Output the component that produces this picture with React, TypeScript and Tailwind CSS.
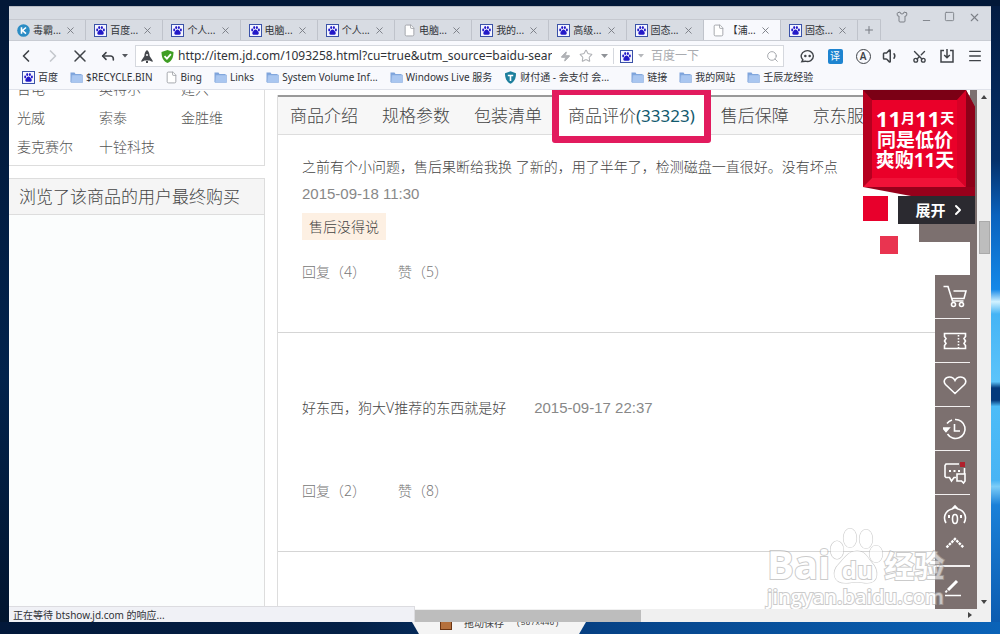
import type { ReactNode } from "react";
import { ChevronLeft, ChevronRight, File, Menu, Minus, Plus, Reply, Scissors, Search, Shirt, Square, Star, Volume1, X, Zap } from "lucide-react";

type IconKind = "duba" | "paw" | "page" | "folder" | "shield";

interface Tab {
  title: string;
  icon: IconKind;
  active?: boolean;
}

interface Bookmark {
  title: string;
  icon: IconKind;
}

const tabs: Tab[] = [
  { title: "毒霸...", icon: "duba" },
  { title: "百度...", icon: "paw" },
  { title: "个人...", icon: "paw" },
  { title: "电脑...", icon: "paw" },
  { title: "个人...", icon: "paw" },
  { title: "电脑...", icon: "page" },
  { title: "我的...", icon: "paw" },
  { title: "高级...", icon: "paw" },
  { title: "固态...", icon: "paw" },
  { title: "【浦...", icon: "page", active: true },
  { title: "固态...", icon: "paw" },
];

const bookmarks: Bookmark[] = [
  { title: "百度", icon: "paw" },
  { title: "$RECYCLE.BIN", icon: "folder" },
  { title: "Bing", icon: "page" },
  { title: "Links", icon: "folder" },
  { title: "System Volume Inf...", icon: "folder" },
  { title: "Windows Live 服务", icon: "folder" },
  { title: "财付通 - 会支付 会...", icon: "shield" },
  { title: "链接", icon: "folder" },
  { title: "我的网站", icon: "folder" },
  { title: "壬辰龙经验", icon: "folder" },
];

const brands = ["台电", "英特尔", "建兴", "光威", "索泰", "金胜维", "麦克赛尔", "十铨科技"];

function PawIcon() {
  return (
    <svg viewBox="0 0 13 13" className="size-[13px] shrink-0">
      <rect x="0.5" y="0.5" width="12" height="12" fill="#f4f5ff" stroke="#3a52a8" />
      <ellipse cx="3.2" cy="6" rx="1" ry="1.4" fill="#2319c8" />
      <ellipse cx="5.2" cy="3.4" rx="1" ry="1.5" fill="#2319c8" />
      <ellipse cx="7.9" cy="3.4" rx="1" ry="1.5" fill="#2319c8" />
      <ellipse cx="9.9" cy="6" rx="1" ry="1.4" fill="#2319c8" />
      <path d="M6.5 5.6c1.4 0 1.8 1.4 2.8 2.4s.4 2.8-1 2.8H4.8c-1.5 0-2-1.8-1-2.8s1.3-2.4 2.7-2.4z" fill="#2319c8" />
    </svg>
  );
}

function SiteIcon({ kind }: { kind: IconKind }) {
  if (kind === "paw") return <PawIcon />;
  if (kind === "page") return <File className="size-[13px] shrink-0 fill-white text-[#9a9ca2]" strokeWidth={1.6} />;
  if (kind === "folder") {
    return (
      <svg viewBox="0 0 13 13" className="size-[13px] shrink-0">
        <path d="M0.5 11V1.5h4l1 1.5h6v8z" fill="#7ea4dc" />
        <path d="M1 11.5l1-7.5h10.5v7.5z" fill="#a9c6f0" stroke="#8fb0e0" strokeWidth="0.6" />
      </svg>
    );
  }
  if (kind === "shield") {
    return (
      <svg viewBox="0 0 13 13" className="size-[13px] shrink-0">
        <path d="M6.5 0.3l5.5 2c0 5-1.5 8.5-5.5 10.5C2.5 10.8 1 7.3 1 2.3z" fill="#1d7f9d" />
        <path d="M3.8 3.8h5.4v1.5H7.3v4.7H5.700V5.3H3.8z" fill="#fff" />
      </svg>
    );
  }
  return (
    <svg viewBox="0 0 13 13" className="size-[13px] shrink-0">
      <circle cx="6.5" cy="6.5" r="6.3" fill="#2b8cc4" />
      <path d="M4.5 3.3v6.4M9 3.5L5.5 6.5 9 9.7" fill="none" stroke="#fff" strokeWidth="1.6" />
    </svg>
  );
}

function ToolButton({ label, children }: { label: string; children: ReactNode }) {
  return (
    <button type="button" aria-label={label} className="flex size-7 items-center justify-center text-[#3f4348]">
      {children}
    </button>
  );
}

function TabStrip() {
  return (
    <div className="flex h-[34px] shrink-0 items-end border-b border-[#c9ccd3] bg-[#d8dce3]">
      <div className="flex min-w-0 flex-1 items-end border-t border-[#c6c9d0]">
        {tabs.map((tab, i) => (
          <div key={i} className={`flex h-5 min-w-0 flex-1 items-center gap-[3px] border-r border-[#bfc3cb] pl-2 pr-[9px] ${tab.active ? "bg-[#f8f9fd]" : ""}`}>
            <SiteIcon kind={tab.icon} />
            <span className="flex-1 whitespace-nowrap text-[10px] leading-4 text-[#303338]">{tab.title}</span>
            <button type="button" aria-label="关闭标签" className="text-[#777b82]"><X className="size-[11px]" strokeWidth={2} /></button>
          </div>
        ))}
        <button type="button" aria-label="新标签" className="flex h-5 w-[23px] shrink-0 items-center justify-center border-r border-[#bfc3cb] text-[#777b82]"><Plus className="size-3" strokeWidth={2} /></button>
      </div>
      <div className="flex h-full w-[110px] shrink-0 items-start justify-between pb-3 pl-[15px] pr-[10px] pt-1 text-[#7c8087]">
        <button type="button" aria-label="皮肤"><Shirt className="size-3" strokeWidth={2} /></button>
        <button type="button" aria-label="最小化" className="pt-1"><Minus className="size-[11px]" strokeWidth={2} /></button>
        <button type="button" aria-label="最大化"><Square className="size-[11px]" strokeWidth={2} /></button>
        <button type="button" aria-label="关闭"><X className="size-[13px]" strokeWidth={2} /></button>
      </div>
    </div>
  );
}

function Toolbar() {
  return (
    <div className="flex h-7 shrink-0 items-center pr-[2px] pt-[2px]">
      <div className="flex w-[126px] shrink-0 items-center pl-[3px]">
        <ToolButton label="后退"><ChevronLeft className="size-5" strokeWidth={2} /></ToolButton>
        <button type="button" aria-label="前进" className="flex w-[26px] justify-center text-[#c5c8ce]"><ChevronRight className="size-5" strokeWidth={2} /></button>
        <ToolButton label="停止"><X className="size-5" strokeWidth={1.8} /></ToolButton>
        <ToolButton label="恢复"><Reply className="size-4" strokeWidth={2.4} /></ToolButton>
        <svg viewBox="0 0 6 4" className="w-[6px]"><path d="M0 0h6L3 3.5z" fill="#55585e" /></svg>
      </div>
      <div className="flex h-[22px] min-w-0 flex-1 items-center border border-[#d5d8de] bg-white">
        <div className="flex min-w-0 flex-1 items-center pl-[5px]">
          <svg viewBox="0 0 12 13" className="mr-2 w-3 shrink-0">
            <path d="M6 0c2 1.5 2.6 4 2.6 6l3 4.5v1.5L8.5 10.5h-5L0.4 12v-1.5l3-4.5C3.4 4 4 1.5 6 0zM5 11h2v2H5z" fill="#45484d" />
            <circle cx="6" cy="5" r="1" fill="#fff" />
          </svg>
          <svg viewBox="0 0 13 13" className="mr-[4px] w-[13px] shrink-0">
            <path d="M6.5 0l6 2c0 5-1.5 9-6 11C2 11 0.5 7 0.5 2z" fill="#3f9e24" />
            <path d="M3.5 6.2l2.4 2.4 4-4.4" fill="none" stroke="#fff" strokeWidth="1.8" />
          </svg>
          <input aria-label="地址" readOnly value="http://item.jd.com/1093258.html?cu=true&utm_source=baidu-search" className="min-w-0 flex-1 bg-transparent text-[12px] leading-4 text-[#303338] outline-none" />
        </div>
        <div className="ml-2 flex shrink-0 items-center gap-2 pr-[5px] text-[#b0b2b6]">
          <Zap className="size-[11px] fill-current" />
          <Star className="size-[14px]" strokeWidth={1.8} />
          <svg viewBox="0 0 8 5" className="w-[7px]"><path d="M0 0h8L4 4.500z" fill="#8f9297" /></svg>
        </div>
        <div className="flex w-[170px] shrink-0 items-center border-l border-[#d5d8de] pl-[6px] pr-1">
          <PawIcon />
          <svg viewBox="0 0 6 4" className="ml-[5px] mr-[7px] w-[6px] shrink-0"><path d="M0 0h6L3 3.5z" fill="#b5b7bb" /></svg>
          <input aria-label="搜索" placeholder="百度一下" className="min-w-0 flex-1 bg-transparent text-[12px] leading-4 outline-none placeholder:text-[#a9abb0]" />
          <Search className="size-[13px] shrink-0 text-[#a5a8ad]" strokeWidth={1.8} />
        </div>
      </div>
      <div className="ml-[9px] flex shrink-0 items-center">
        <ToolButton label="消息">
          <svg viewBox="0 0 16 16" className="size-[15px]" fill="none" stroke="currentColor" strokeWidth="1.5">
            <path d="M2 13.500l1-2A6.5 5.8 0 1 1 5.5 13z" />
            <circle cx="5.7" cy="7.5" r="0.6" fill="currentColor" /><circle cx="10.3" cy="7.5" r="0.6" fill="currentColor" />
          </svg>
        </ToolButton>
        <ToolButton label="翻译"><span className="flex size-[15px] items-center justify-center rounded-xs bg-[#1e84d0] text-[10px] leading-none text-white">译</span></ToolButton>
        <ToolButton label="朗读"><span className="flex size-[15px] items-center justify-center rounded-full border border-[#3f4348] text-[10px] font-semibold leading-none">A</span></ToolButton>
        <ToolButton label="声音"><Volume1 className="size-[18px]" strokeWidth={2} /></ToolButton>
        <ToolButton label="截图"><Scissors className="size-[15px] -rotate-90" strokeWidth={2.2} /></ToolButton>
        <ToolButton label="下载">
          <svg viewBox="0 0 14 14" className="size-[14px]" fill="none" stroke="currentColor" strokeWidth="1.5">
            <path d="M4 1.5H1v11.5h12V1.5h-3M7 0v8.5M4.2 6L7 8.8 9.8 6" />
          </svg>
        </ToolButton>
        <ToolButton label="菜单"><Menu className="size-4" strokeWidth={2} /></ToolButton>
      </div>
    </div>
  );
}

function BookmarkBar() {
  return (
    <nav className="flex h-[21px] shrink-0 items-center gap-3 overflow-hidden border-b border-[#dfe2ea] pb-1 pl-[13px]">
      {bookmarks.map((b) => (
        <a key={b.title} href="#" className={`flex shrink-0 items-center gap-[3px] whitespace-nowrap text-[10px] leading-4 text-[#303338] ${b.icon === "shield" ? "w-[115px]" : ""}`}>
          <SiteIcon kind={b.icon} />
          {b.title}
        </a>
      ))}
    </nav>
  );
}

function LeftColumn() {
  return (
    <aside className="flex w-64 shrink-0 flex-col">
      <div className="overflow-hidden border-b border-r border-[#ddd] pb-1">
        <ul className="-mt-4 grid grid-cols-[82px_82px_82px] pl-2 text-[14px] font-light leading-[29px] text-[#555]">
          {brands.map((brand) => (
            <li key={brand}><a href="#">{brand}</a></li>
          ))}
        </ul>
      </div>
      <section className="mt-3 flex min-h-0 flex-1 flex-col border-r border-t border-[#ddd] bg-[#fbfdfd]">
        <h2 className="h-9 shrink-0 border-b border-[#ddd] bg-[#f5f5f5] pl-[10px] text-[17px] font-light leading-9 text-[#444]">浏览了该商品的用户最终购买</h2>
      </section>
    </aside>
  );
}

function ProductTabs() {
  return (
    <nav className="flex h-10 shrink-0 items-center gap-6 whitespace-nowrap border-b border-t-2 border-b-[#ddd] border-t-[#999] bg-[#f7f7f7] pl-3 text-[17px] font-light leading-6 text-[#444]">
      <a href="#">商品介绍</a>
      <a href="#">规格参数</a>
      <a href="#">包装清单</a>
      <a href="#" className="relative mx-[2px]">
        <span className="absolute -inset-x-4 -bottom-[15px] -top-4 rounded-[3px] border-[7px] border-[#e21b5e] bg-white" />
        <span className="relative">商品评价<span className="font-normal text-[#125a6e]">(33323)</span></span>
      </a>
      <a href="#">售后保障</a>
      <a href="#">京东服务</a>
    </nav>
  );
}

function Replies({ replies, likes }: { replies: number; likes: number }) {
  return (
    <div className="flex gap-8 leading-5 text-[#777]">
      <button type="button">回复（{replies}）</button>
      <button type="button">赞（{likes}）</button>
    </div>
  );
}

function Reviews() {
  return (
    <div className="min-h-0 flex-1 text-[14px] font-light leading-[27px] text-[#444]">
      <article className="border-b border-[#d5d5d5] pb-[50px] pl-6 pt-[18px]">
        <p className="whitespace-nowrap">之前有个小问题，售后果断给我换 了新的，用了半年了，检测磁盘一直很好。没有坏点</p>
        <time className="block font-['Liberation_Sans',sans-serif] text-[15px] text-[#888]">2015-09-18 11:30</time>
        <span className="mb-[22px] mt-[6px] block w-fit bg-[#fdf0e3] px-[7px]">售后没得说</span>
        <Replies replies={4} likes={5} />
      </article>
      <article className="border-b border-[#d5d5d5] pb-[50px] pl-6 pt-[61px]">
        <div className="mb-[60px] flex gap-7">
          <p>好东西，狗大V推荐的东西就是好</p>
          <time className="font-['Liberation_Sans',sans-serif] text-[15px] text-[#888]">2015-09-17 22:37</time>
        </div>
        <Replies replies={2} likes={8} />
      </article>
    </div>
  );
}

function SaleBanner() {
  return (
    <div className="absolute right-[2px] top-0 w-28">
      <div className="relative h-[106px]">
        <svg viewBox="0 0 112 106" className="absolute inset-0 size-full">
          <path d="M0 0h103l9 17v89H48L0 97z" fill="#97001b" />
          <path d="M0 0h103L94 10H9z" fill="#7b0015" />
          <path d="M0 0l9 10v78L0 97z" fill="#b5001f" />
          <path d="M103 0l9 17v80h-9z" fill="#8d0018" />
          <path d="M103 0v97L94 88V10z" fill="#d80026" />
          <path d="M0 97l9-9h85l9 9z" fill="#f01238" />
          <path d="M9 10h85v78H9z" fill="#ea0029" />
        </svg>
        <div className="relative flex flex-col items-center pr-2 pt-4 font-bold text-white">
          <p className="flex items-end text-[14px] leading-6"><span className="text-[22px]">11</span>月<span className="text-[22px]">11</span>天</p>
          <p className="text-[19px] leading-5">同是低价</p>
          <p className="text-[19px] leading-5">爽购11天</p>
        </div>
      </div>
      <div className="flex items-start justify-between">
        <span className="size-[25px] bg-[#e8002c]" />
        <button type="button" className="flex h-7 w-[77px] items-center justify-center gap-1 bg-[#2b2a30] pl-2 text-[15px] font-bold text-white">
          展开<ChevronRight className="size-4" strokeWidth={3} />
        </button>
      </div>
      <div className="flex items-start">
        <span className="ml-[17px] mt-3 size-[18px] bg-[#e93450]" />
        <span className="ml-[21px] h-[18px] flex-1 bg-[#7c706f]" />
      </div>
    </div>
  );
}

function SideButton({ label, children }: { label: string; children: ReactNode }) {
  return (
    <button type="button" aria-label={label} className="flex h-11 w-full items-center justify-center border-b border-[#f3f0f0] pl-1">
      <svg viewBox="0 0 24 24" className="size-6" fill="none" stroke="#fff" strokeWidth="1.6">{children}</svg>
    </button>
  );
}

function SideToolbar() {
  return (
    <div className="absolute bottom-0 right-[7px] top-[185px] flex w-[35px] flex-col bg-[#7c706f]">
      <SideButton label="购物车">
        <path d="M0.5 1.5H5l4.5 14.5h11M10.5 6H23l-2 7.5H9" />
        <circle cx="10.5" cy="19.5" r="2" /><circle cx="18.5" cy="19.5" r="2" />
      </SideButton>
      <SideButton label="优惠券">
        <path d="M1.5 4.5h21v3l-1.5 2 1.5 2.5-1.5 2.5 1.5 2v3h-21v-3l1.5-2L1.5 12 3 9.5l-1.5-2z" />
        <path d="M15.5 6v13" strokeDasharray="1.5 1.5" />
      </SideButton>
      <SideButton label="关注">
        <path d="M12 20.5L2.500 11.500C-0.500 8 2.500 4 6.500 4 9 4 11 5.500 12 7.500 13 5.500 15 4 17.500 4c4 0 7 4 4 7.500z" />
      </SideButton>
      <SideButton label="历史">
        <path d="M4 6.5A9.8 9.8 0 0 1 9 3M12 2.500A9.5 9.5 0 1 1 4.5 17M11.5 7v7H17" />
        <path d="M0 11h6l-3 3.5z" fill="#fff" />
      </SideButton>
      <SideButton label="咨询">
        <path d="M16 3H3L2 4.5v11l1 1h3.5l2 3.5 2.5-3.5h2M21.5 7v6" />
        <path d="M14 13h8v7l-1.5 2-2-2H14z" />
        <path d="M6 10h2M10.5 10h2M15 10h2" strokeWidth="2" />
        <rect x="17" y="1" width="5" height="5" fill="#b0202c" stroke="none" />
      </SideButton>
      <div className="flex h-[72px] flex-col items-center gap-[10px] border-b-2 border-[#f3f0f0] pl-1 pt-2">
        <button type="button" aria-label="京东助手">
          <svg viewBox="0 0 24 24" className="size-6" fill="none" stroke="#fff" strokeWidth="1.6">
            <path d="M3 20c-3-5-1.5-12 6-14l3-3 3 3c7.5 2 9 9 6 14M9 6l3-1.5L15 6" />
            <ellipse cx="12" cy="16" rx="2.5" ry="4.5" />
            <path d="M6 12v3M18 12v3" strokeWidth="2" />
          </svg>
        </button>
        <button type="button" aria-label="展开更多">
          <svg viewBox="0 0 20 12" className="w-5" fill="none" stroke="#fff" strokeWidth="2.4">
            <path d="M1.5 10.5L10 2l8.500 8.500" strokeDasharray="2.6 0.9" />
          </svg>
        </button>
      </div>
      <button type="button" aria-label="反馈" className="flex flex-1 items-center justify-center">
        <svg viewBox="0 0 18 18" className="size-[18px]" fill="none" stroke="#fff">
          <path d="M4 11L13 2" strokeWidth="3" /><path d="M1.5 13.5l1.5-2" strokeWidth="2" /><path d="M1 16.5h16" strokeWidth="1.5" />
        </svg>
      </button>
    </div>
  );
}

function Watermark() {
  return (
    <div className="pointer-events-none absolute bottom-0 right-[32px] w-[178px] whitespace-nowrap font-['Open_Sans','Noto_Sans_CJK_SC',sans-serif] font-bold text-white opacity-60 [-webkit-text-stroke:2px_#aaa] [paint-order:stroke_fill]">
      <div className="flex items-end">
        <span className="text-[40px] leading-[44px]">Bai</span>
        <span className="relative block h-[60px] w-[54px]">
          <svg viewBox="0 0 54 60" className="absolute inset-0 size-full" fill="#fff" stroke="#aaa" strokeWidth="1.2">
            <ellipse cx="7" cy="24" rx="6.5" ry="9" />
            <ellipse cx="20" cy="12" rx="6.5" ry="9.5" />
            <ellipse cx="36" cy="13" rx="6.5" ry="9.5" />
            <ellipse cx="46" cy="28" rx="6.5" ry="8.5" />
            <path d="M27 25c8 0 10 6 15 12 6 6 8 20-5 20-4 0-6-1-10-1s-7 1-11 1C2 57 2 45 9 38c5-5 9-13 18-13z" />
          </svg>
          <span className="absolute inset-x-0 bottom-[2px] text-center text-[24px] leading-7">du</span>
        </span>
        <span className="text-[30px] leading-[40px]">经验</span>
      </div>
      <p className="pb-px text-[20px] font-semibold leading-[22px]">jingyan.baidu.com</p>
    </div>
  );
}

function Viewport() {
  return (
    <div className="flex min-h-0 flex-1 flex-col bg-white">
      <div className="flex min-h-0 flex-1">
        <div className="relative flex min-w-0 flex-1 overflow-hidden bg-white">
          <LeftColumn />
          <main className="ml-3 mt-[5px] flex min-w-0 flex-1 flex-col border-l border-[#ddd]">
            <ProductTabs />
            <Reviews />
          </main>
          <div className="w-[7px] shrink-0 bg-[#7c706f]" />
          <SaleBanner />
          <SideToolbar />
          <Watermark />
        </div>
        <div className="flex w-[14px] shrink-0 flex-col items-center bg-[#f0f0f0] py-[5px]">
          <svg viewBox="0 0 6 4" className="w-[6px]"><path d="M0 4h6L3 0z" fill="#444" /></svg>
          <div className="mt-[122px] h-[33px] w-[11px] border border-[#aaa] bg-[#bdbdbd]" />
          <svg viewBox="0 0 6 4" className="mt-auto w-[6px]"><path d="M0 0h6L3 4z" fill="#444" /></svg>
        </div>
      </div>
      <div className="flex h-[13px] shrink-0 items-end bg-[#f0f0f0]">
        <p className="relative h-4 w-[406px] shrink-0 border-r border-t border-[#dcdce0] bg-[#f0f1f6] pl-1 text-[10px] leading-4 text-[#303338]">正在等待 btshow.jd.com 的响应...</p>
        <div className="h-3 w-[226px] shrink-0 bg-[#bdbdbd]" />
        <svg viewBox="0 0 4 6" className="mb-[4px] ml-auto mr-[19px] w-1"><path d="M0 0v6l4-3z" fill="#444" /></svg>
      </div>
    </div>
  );
}

export default function App() {
  return (
    <div className="flex h-screen flex-col overflow-hidden bg-[linear-gradient(90deg,#02183a_0%,#042046_35%,#064286_60%,#0a63b8_100%)] font-['Noto_Sans','Noto_Sans_CJK_SC',sans-serif]">
      <div className="h-[6px] shrink-0 bg-[#021838]" />
      <div className="flex min-h-0 flex-1">
        <div className="w-[9px] shrink-0 bg-[linear-gradient(180deg,#021838_0%,#02234c_60%,#02152f_100%)]" />
        <div className="flex min-w-0 flex-1 flex-col border-t border-[#b8bcc4] bg-[#f8f9fd]">
          <TabStrip />
          <Toolbar />
          <BookmarkBar />
          <Viewport />
        </div>
        <div className="w-[9px] shrink-0 bg-[linear-gradient(180deg,#031c42_0%,#05306a_25%,#0a62bd_34%,#1488e8_46%,#d2f2ff_48%,#45b4f5_50%,#5cc4fa_61%,#043a7c_62%,#043a7c_64%,#4cbcf8_65%,#48b4f4_77%,#7ccdf8_78%,#1a80d8_81%,#0c5cb0_100%)]" />
      </div>
      <div className="h-3 shrink-0 overflow-hidden pl-[412px]">
        <div className="flex w-[174px] items-start gap-3 bg-[#f4f4f4] pl-7 text-[10px] leading-[10px] text-[#444] [clip-path:polygon(0_0,100%_0,96%_100%,4%_100%)]">
          <span className="h-2 w-3 border border-t-0 border-[#6b3412] bg-[#b5703c]" />
          <span className="-mt-1 pb-[6px]">拖动保存</span>
          <span className="-mt-1 pb-[6px] font-['Liberation_Mono',monospace] text-[8px]">(567x446)</span>
        </div>
      </div>
    </div>
  );
}
